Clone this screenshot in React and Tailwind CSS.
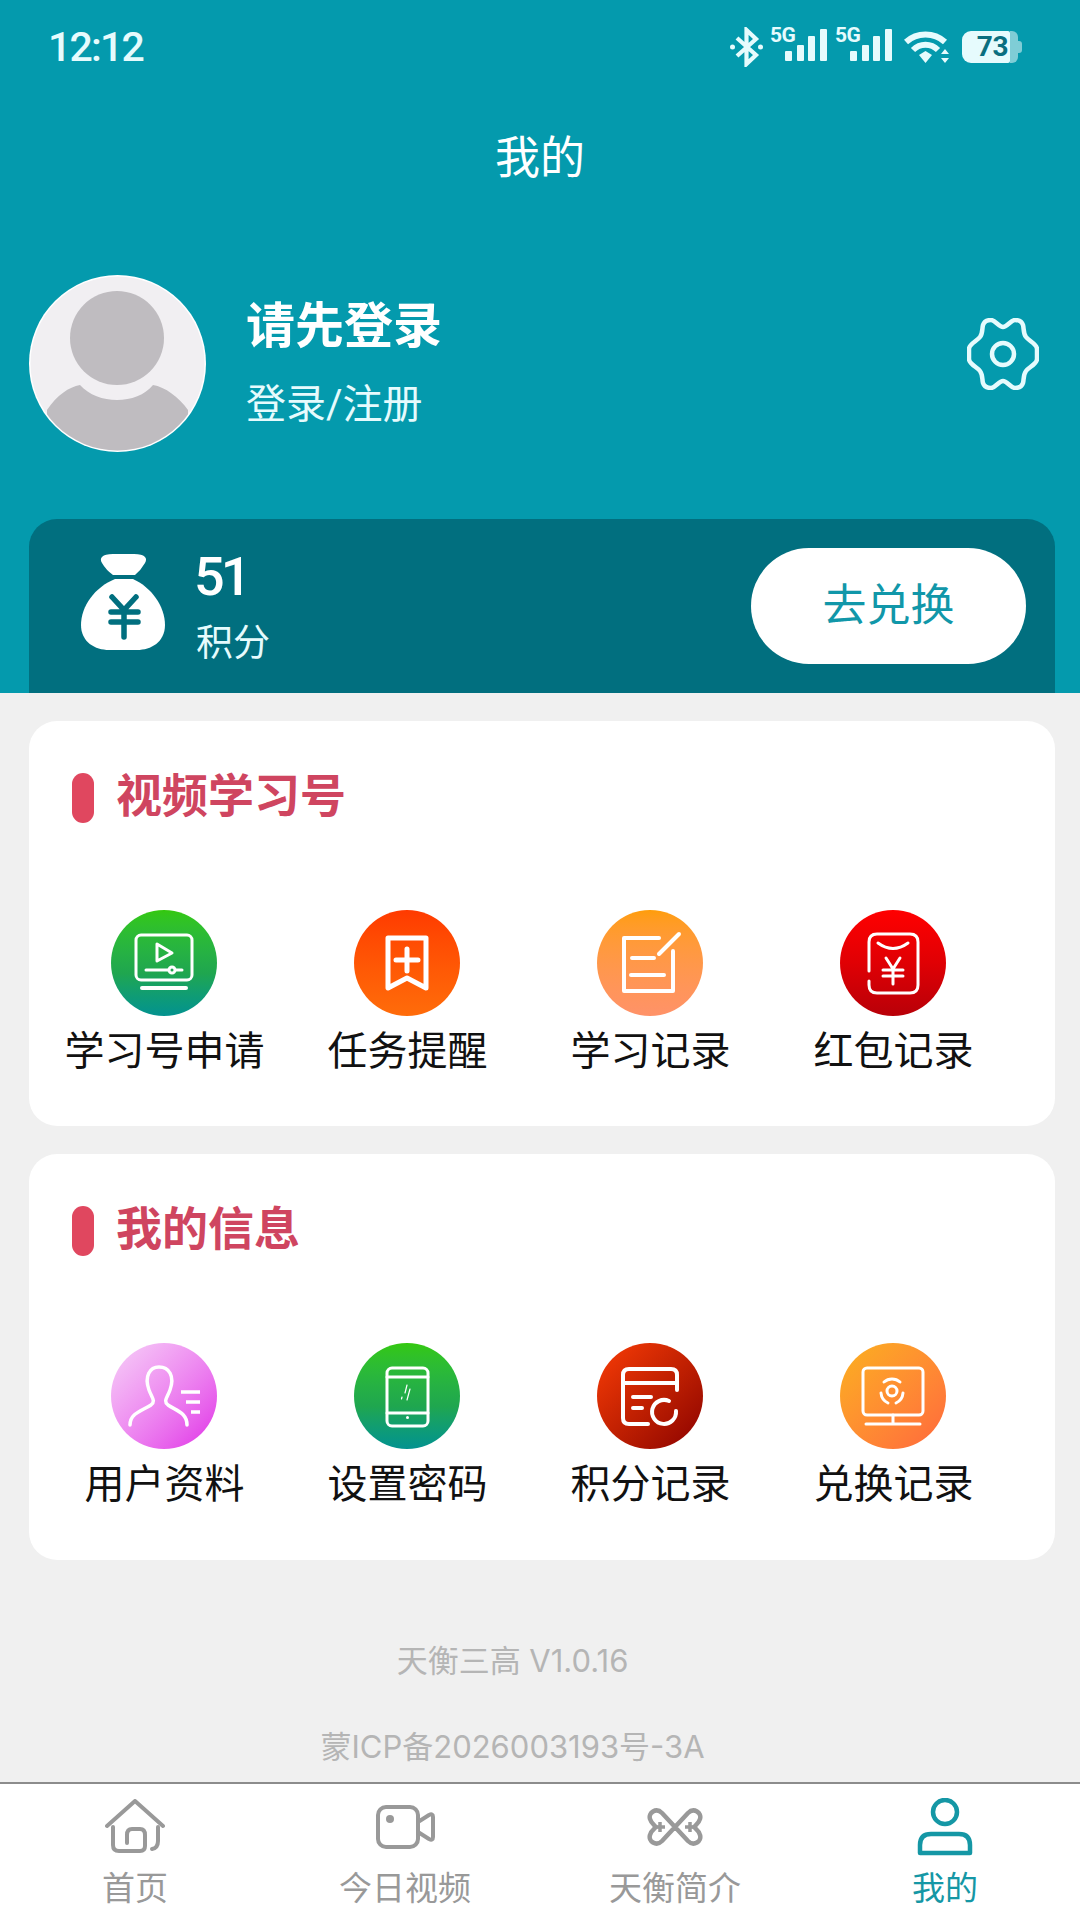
import React from "react";

/* Status bar */
function Signal() {
  return (
    <div className="relative w-[57px] h-[36px]">
      <span className="absolute left-0 top-[-4px] text-[21px] leading-[21px] font-bold tracking-[-0.5px] text-[#e6fbfd] font-['Roboto',sans-serif]">5G</span>
      <svg width="57" height="36" viewBox="0 0 57 36" fill="#e6fbfd" className="absolute left-0 top-0">
        <rect x="15" y="22" width="7" height="10" rx="1" />
        <rect x="27" y="16" width="7" height="16" rx="1" />
        <rect x="38" y="7" width="7" height="25" rx="1" />
        <rect x="50" y="0" width="7" height="32" rx="1" />
      </svg>
    </div>
  );
}

function StatusBar() {
  return (
    <div className="h-[94px] pl-[48px] pr-[57px] flex items-center justify-between text-[#e6fbfd]">
      <span className="text-[41px] font-medium leading-none tracking-[-1.8px]">12:12</span>
      <div className="flex items-center">
        <svg width="33" height="40" viewBox="0 0 33 40" fill="none" stroke="#e6fbfd" strokeWidth="4.200">
          <path d="M7,11 L26,28 L16.500,37 V3 L26,12 L7,29" />
          <circle cx="2.500" cy="20" r="2.500" fill="#e6fbfd" stroke="none" />
          <circle cx="30.500" cy="20" r="2.500" fill="#e6fbfd" stroke="none" />
        </svg>
        <div className="ml-[7px]"><Signal /></div>
        <div className="ml-[8px]"><Signal /></div>
        <svg className="ml-[12px]" width="46" height="33" viewBox="0 0 46 33" fill="none" stroke="#e6fbfd" strokeWidth="6">
          <path d="M2,11 C13,1 30,1 41,11" />
          <path d="M9,19 C16,12 27,12 34,19" />
          <path d="M15,24 L21.500,20 L28,24 L21.500,32 Z" fill="#e6fbfd" stroke="none" />
          <path d="M37,23 L41,18 L45,23 Z M37,27 L41,32 L45,27 Z" fill="#e6fbfd" stroke="none" />
        </svg>
        <div className="ml-[12px] relative flex items-center h-[32px] w-[61px]">
          <div className="h-[32px] w-[48px] bg-[#e6fbfd] rounded-l-[9px] rounded-r-[2px] flex items-center justify-end pr-[2px]">
            <span className="text-[28px] leading-none font-bold tracking-[-0.5px] text-[#0a6f80] font-['Roboto',sans-serif]">73</span>
          </div>
          <div className="h-[32px] w-[8px] bg-[#7fcdd6] rounded-r-[6px]" />
          <div className="h-[12px] w-[4px] bg-[#7fcdd6] rounded-r-[3px]" />
        </div>
      </div>
    </div>
  );
}

function Avatar() {
  return (
    <svg width="177" height="177" viewBox="0 0 177 177">
      <defs>
        <clipPath id="avatar-clip"><circle cx="88.500" cy="88.500" r="87" /></clipPath>
      </defs>
      <circle cx="88.500" cy="88.500" r="88.500" fill="#ffffff" />
      <circle cx="88.500" cy="88.500" r="87" fill="#f1eff2" />
      <g clipPath="url(#avatar-clip)" fill="#bfbcc0">
        <circle cx="88" cy="63" r="47" />
        <path d="M18,135 C28,120 40,112 51,110 C60,120 74,125 88,125 C102,125 116,120 124,110 C136,112 150,122 159,135 L159,177 L18,177 Z" />
      </g>
    </svg>
  );
}

function GearIcon() {
  return (
    <svg className="-mt-[20px]" width="72" height="72" viewBox="0 0 72 72" fill="none" stroke="#e6fbfd" strokeWidth="4.500" strokeLinejoin="round">
      <path d="M36,9 C40,9 44,2 48,2 C52,2 55,4 56,7 C57,10 56,15 59,19 C62,23 70,26 70,31 V41 C70,46 62,49 59,53 C56,57 57,62 56,65 C55,68 52,70 48,70 C44,70 40,63 36,63 C32,63 28,70 24,70 C20,70 17,68 16,65 C15,62 16,57 13,53 C10,49 2,46 2,41 V31 C2,26 10,23 13,19 C16,15 15,10 16,7 C17,4 20,2 24,2 C28,2 32,9 36,9 Z" />
      <circle cx="36" cy="36" r="11" />
    </svg>
  );
}

function MoneyBag() {
  return (
    <svg className="-mt-[8px]" width="84" height="96" viewBox="0 0 84 96">
      <path fill="#fff" d="M32,0 H53 C64,0 67,4 64,9 Q60,16 54,21 H32 Q25,16 21,9 C18,4 21,0 32,0 Z" />
      <path fill="#fff" d="M34,25 H52 C70,33 84,52 84,71 C84,88 70,96 56,96 H28 C14,96 0,88 0,71 C0,52 14,33 34,25 Z" />
      <path fill="none" stroke="#016f7f" strokeWidth="5.500" strokeLinecap="round" d="M31,43 L43,56 L55,43 M30,58 H57 M30,68 H57 M43,56 V83" />
    </svg>
  );
}

/* Grid icon drawings, centred on 0,0 inside a 106px circle */
const g = { fill: "none", stroke: "#fff", strokeLinecap: "round", strokeLinejoin: "round" };

const drawings = {
  video: (
    <g {...g} strokeWidth="3">
      <rect x="-28" y="-28" width="56" height="45" rx="5" />
      <path d="M-7,-19 V-2 L8,-10 Z" />
      <path d="M-18,7 H18" />
      <circle cx="8" cy="7" r="3" fill="#1fa64f" />
      <path d="M-22,25 H22" strokeWidth="4" />
    </g>
  ),
  bookmark: (
    <g {...g} strokeWidth="5">
      <path d="M-19,-25 H19 V25 L0,15 L-19,25 Z" />
      <path d="M-11,-3 H11 M0,-14 V8" />
    </g>
  ),
  note: (
    <g {...g} strokeWidth="4">
      <path d="M9,-25 H-26 V28 H23 V-12" />
      <path d="M-18,-5 H4 M-19,12 H14" />
      <path d="M9,-9 L29,-29" />
    </g>
  ),
  packet: (
    <g {...g} strokeWidth="3">
      <path d="M-24,8 V-21 Q-24,-29 -16,-29 H17 Q25,-29 25,-21 V22 Q25,30 17,30 H-16 Q-24,30 -24,22 V18" />
      <path d="M-15,-20 Q0,-9 15,-20" />
      <path d="M-7,-5 L0,6 L7,-5 M-10,7 H10 M-10,13 H10 M0,6 V21" />
    </g>
  ),
  user: (
    <g {...g} strokeWidth="3.500">
      <path d="M-34,29 C-34,17 -22,15 -13,9 C-8,5 -12,2 -15,-6 C-20,-20 -14,-29 -5,-29 C5,-29 11,-20 6,-6 C3,2 -1,5 4,9 C13,15 23,17 23,29" />
      <path d="M17,-4 H36 M22,6 H36 M27,16 H36" strokeLinecap="butt" />
    </g>
  ),
  phone: (
    <g {...g} strokeWidth="3">
      <rect x="-20" y="-28" width="41" height="58" rx="5" />
      <path d="M-20,-19 H21 M-20,17 H21" />
      <circle cx="0.500" cy="21.500" r="1.500" fill="#fff" stroke="none" />
      <path d="M0,-11 L-2,-3 M3,-7 L0,4 M-5,1 L-5.500,3" strokeWidth="1.200" />
    </g>
  ),
  bill: (
    <g {...g} strokeWidth="4">
      <path d="M-2,28 H-21 Q-27,28 -27,22 V-21 Q-27,-27 -21,-27 H21 Q27,-27 27,-21 V-6" />
      <path d="M-27,-13 H27" />
      <path d="M-17,1 H1 M-17,12 H-8" />
      <path d="M26,15 A12,12 0 1 1 19,5" />
    </g>
  ),
  monitor: (
    <g {...g} strokeWidth="3">
      <rect x="-30" y="-28" width="60" height="47" rx="4" />
      <path d="M0,19 V28 M-27,28 H27" />
      <circle cx="-1" cy="-5" r="5" />
      <path d="M-9,-14 A12,12 0 0 1 7,-14 M-12,-3 A12,12 0 0 0 -5,7 M10,-3 A12,12 0 0 1 3,7" />
    </g>
  ),
};

function GridItem({ icon, label, circle }) {
  return (
    <div className="flex flex-col items-center">
      <div className={`w-[106px] h-[106px] rounded-full ${circle}`}>
        <svg width="106" height="106" viewBox="-53 -53 106 106">{drawings[icon]}</svg>
      </div>
      <span className="mt-[12px] ml-[2px] text-[40px] leading-[48px] text-[#111] whitespace-nowrap">{label}</span>
    </div>
  );
}

function Section({ title, children }) {
  return (
    <section className="h-[405px] last:h-[406px] bg-white rounded-[28px] pt-[52px]">
      <div className="flex items-center h-[50px] pl-[43px]">
        <div className="w-[22px] h-[50px] rounded-full bg-[#e0475f]" />
        <h2 className="ml-[22px] pb-[5px] text-[46px] leading-none font-bold text-[#cf4560]">{title}</h2>
      </div>
      <div className="mt-[87px] ml-[13px] grid grid-cols-4 w-[972px]">{children}</div>
    </section>
  );
}

/* Tab bar */
function HomeIcon() {
  return (
    <svg width="60" height="56" viewBox="0 0 60 56" fill="none" stroke="#999" strokeWidth="4" strokeLinecap="round" strokeLinejoin="round">
      <path d="M2,27 L30,2 L58,27" />
      <path d="M8,28 V46 Q8,52 14,52 H35 Q40,52 40,47 V36 Q40,30 35,30 H27 Q22,30 22,36 V44" />
      <path d="M53,28 V42 Q53,49 47,50" />
    </svg>
  );
}

function VideoIcon() {
  return (
    <svg width="59" height="44" viewBox="0 0 59 44" fill="none" stroke="#999" strokeWidth="4" strokeLinejoin="round">
      <rect x="2" y="2" width="40" height="40" rx="8" />
      <path d="M42,17 L53,10 Q57,8 57,12 V32 Q57,36 53,34 L42,27" />
      <circle cx="14" cy="14" r="4" fill="#999" stroke="none" />
    </svg>
  );
}

function KnotIcon() {
  return (
    <svg width="56" height="38" viewBox="0 0 56 38" fill="none" stroke="#999" strokeWidth="4.500" strokeLinejoin="round" strokeLinecap="round">
      <path d="M28,19 L15,5 C9,-1 1,5 3,11 C4,15 7,17 9,19 C7,21 4,23 3,27 C1,33 9,39 15,33 L41,5 C47,-1 55,5 53,11 C52,15 49,17 47,19 C49,21 52,23 53,27 C55,33 47,39 41,33 L28,19" />
      <path d="M8,19 H18 M13,14 V24 M38,19 H48 M43,14 V24" strokeWidth="3.500" strokeLinecap="butt" />
    </svg>
  );
}

function PersonIcon() {
  return (
    <svg width="56" height="58" viewBox="0 0 56 58" fill="none" stroke="#1597a5" strokeWidth="4.500" strokeLinejoin="round">
      <circle cx="28" cy="14" r="12" />
      <path d="M3,55 V47 Q3,36 14,36 H42 Q53,36 53,47 V55 Z" />
    </svg>
  );
}

function Tab({ label, active, children }) {
  return (
    <div className="flex flex-col items-center">
      <div className="h-[86px] flex items-center">{children}</div>
      <span className={`text-[33px] leading-[38px] ${active ? "text-[#1597a5]" : "text-[#999]"}`}>{label}</span>
    </div>
  );
}

export default function App() {
  return (
    <div className="w-[1080px] h-[1920px] flex flex-col bg-[#f0f0f0] overflow-hidden font-['Roboto','Noto_Sans_CJK_SC',sans-serif]">
      {/* Header */}
      <header className="h-[693px] shrink-0 flex flex-col bg-[#049aad] text-white">
        <StatusBar />
        <h1 className="mt-[35px] h-[60px] text-[45px] leading-[60px] font-normal text-center">我的</h1>
        <div className="mt-[86px] h-[177px] pl-[29px] pr-[41px] flex items-center">
          <Avatar />
          <div className="ml-[40px] flex-1">
            <div className="text-[49px] leading-[60px] font-bold">请先登录</div>
            <div className="mt-[23px] text-[40px] leading-[50px] text-[#e6fbfd]">登录/注册</div>
          </div>
          <GearIcon />
        </div>
        <div className="mt-[67px] ml-[29px] mr-[25px] h-[174px] bg-[#016f7f] rounded-t-[28px] flex items-center pl-[52px] pr-[29px]">
          <MoneyBag />
          <div className="ml-[31px] flex-1">
            <div className="text-[54px] leading-[60px] font-medium tracking-[-4px] -ml-[2px]">51</div>
            <div className="mt-[15px] text-[37px] leading-[44px] text-[#e6fbfd]">积分</div>
          </div>
          <button className="w-[275px] h-[116px] rounded-full bg-white text-[#1197a9] text-[44px]">去兑换</button>
        </div>
      </header>

      {/* Grid sections */}
      <main className="flex-1 pl-[29px] pr-[25px] pt-[28px]">
        <div className="flex flex-col gap-[28px]">
          <Section title="视频学习号">
            <GridItem icon="video" label="学习号申请" circle="bg-linear-to-b from-[#34c80c] via-[#1fa64f] via-60% to-[#04928f]" />
            <GridItem icon="bookmark" label="任务提醒" circle="bg-linear-to-b from-[#ff3a00] to-[#ff6c0a]" />
            <GridItem icon="note" label="学习记录" circle="bg-linear-to-b from-[#ff9d08] to-[#ff9268]" />
            <GridItem icon="packet" label="红包记录" circle="bg-linear-to-b from-[#ff0000] via-[#e00004] to-[#b80008]" />
          </Section>
          <Section title="我的信息">
            <GridItem icon="user" label="用户资料" circle="bg-linear-to-br from-[#f5d0f7] to-[#df22e6]" />
            <GridItem icon="phone" label="设置密码" circle="bg-linear-to-b from-[#34c80c] via-[#1fa64f] via-60% to-[#04928f]" />
            <GridItem icon="bill" label="积分记录" circle="bg-linear-to-br from-[#fa3c06] to-[#8c0000]" />
            <GridItem icon="monitor" label="兑换记录" circle="bg-linear-to-br from-[#fbb01c] to-[#ff673c]" />
          </Section>
        </div>
        <div className="pr-[59px] text-center text-[31px] text-[#b5b5b5] font-['Inter','Noto_Sans_CJK_SC',sans-serif]">
          <div className="mt-[79px] leading-[44px]">天衡三高 V1.0.16</div>
          <div className="mt-[42px] leading-[44px]">蒙ICP备2026003193号-3A</div>
        </div>
      </main>

      {/* Tab bar */}
      <nav className="h-[138px] shrink-0 bg-white border-t-2 border-[#8c8c8c] grid grid-cols-4">
        <Tab label="首页"><HomeIcon /></Tab>
        <Tab label="今日视频"><VideoIcon /></Tab>
        <Tab label="天衡简介"><KnotIcon /></Tab>
        <Tab label="我的" active><PersonIcon /></Tab>
      </nav>
    </div>
  );
}
